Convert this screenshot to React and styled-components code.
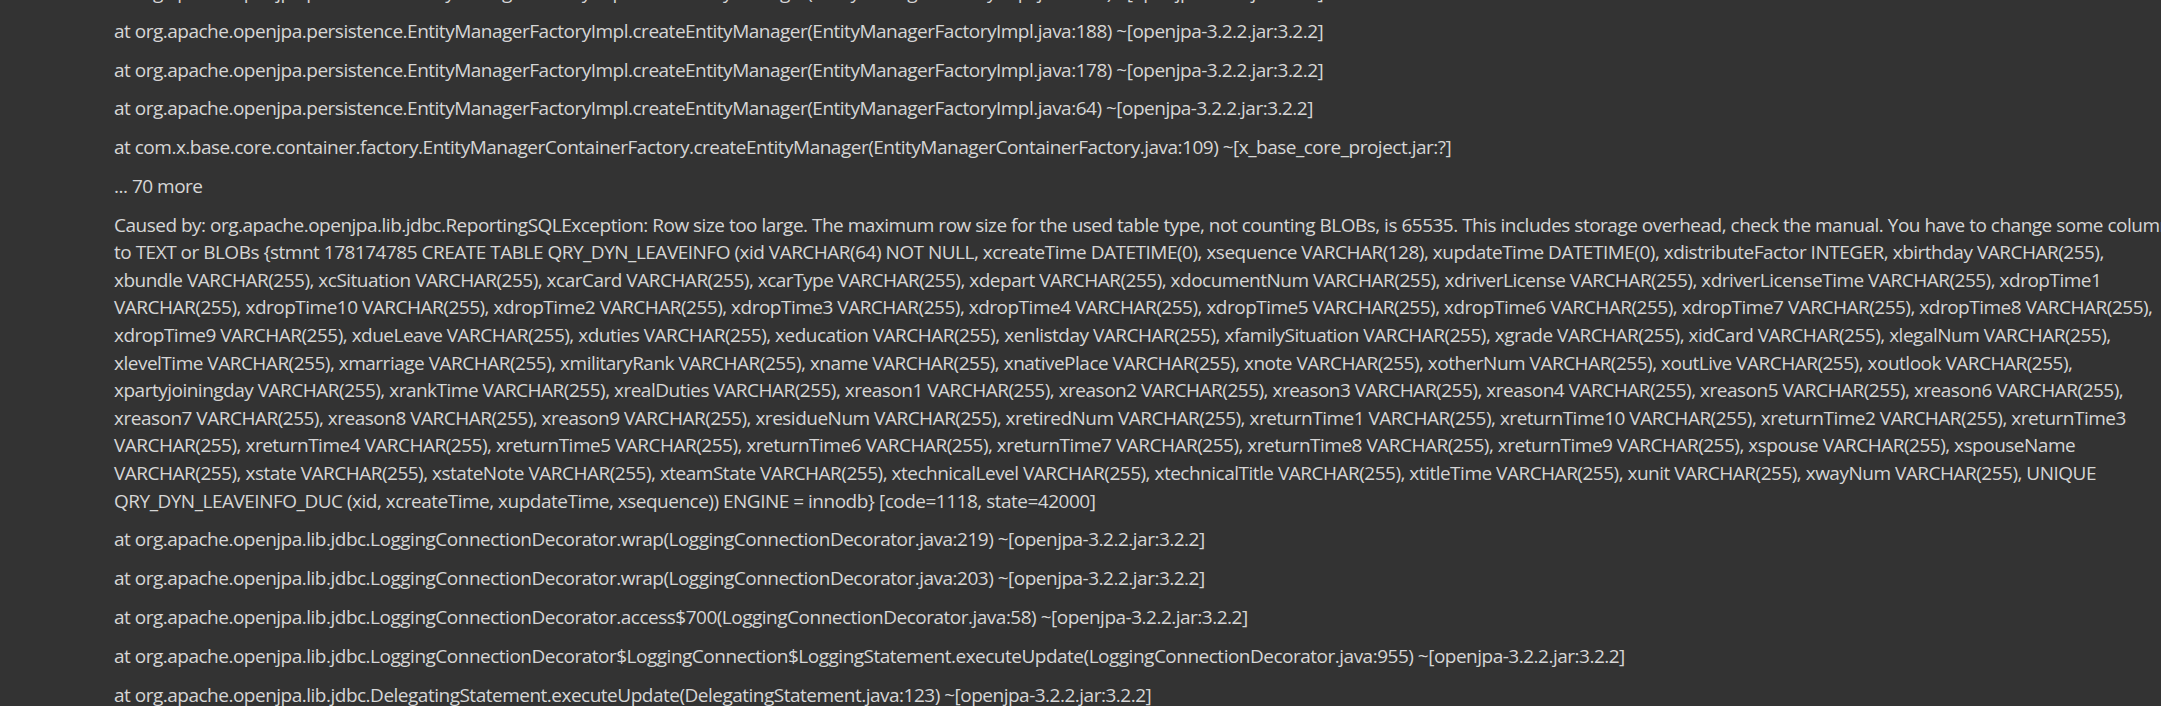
import React from 'react';
import styled, { createGlobalStyle } from "styled-components";

const GlobalStyle = createGlobalStyle`
    html, body {
        margin: 0;
        padding: 0;
        background: #333333;
        overflow: hidden;
    }
`;

const JAR = "~[openjpa-3.2.2.jar:3.2.2]";

const entries = [
    [`at org.apache.openjpa.persistence.EntityManagerFactoryImpl.createEntityManager(EntityManagerFactoryImpl.java:197) ${JAR}`],
    [`at org.apache.openjpa.persistence.EntityManagerFactoryImpl.createEntityManager(EntityManagerFactoryImpl.java:188) ${JAR}`],
    [`at org.apache.openjpa.persistence.EntityManagerFactoryImpl.createEntityManager(EntityManagerFactoryImpl.java:178) ${JAR}`],
    [`at org.apache.openjpa.persistence.EntityManagerFactoryImpl.createEntityManager(EntityManagerFactoryImpl.java:64) ${JAR}`],
    ["at com.x.base.core.container.factory.EntityManagerContainerFactory.createEntityManager(EntityManagerContainerFactory.java:109) ~[x_base_core_project.jar:?]"],
    ["... 70 more"],
    [
        "Caused by: org.apache.openjpa.lib.jdbc.ReportingSQLException: Row size too large. The maximum row size for the used table type, not counting BLOBs, is 65535. This includes storage overhead, check the manual. You have to change some columns",
        "to TEXT or BLOBs {stmnt 178174785 CREATE TABLE QRY_DYN_LEAVEINFO (xid VARCHAR(64) NOT NULL, xcreateTime DATETIME(0), xsequence VARCHAR(128), xupdateTime DATETIME(0), xdistributeFactor INTEGER, xbirthday VARCHAR(255),",
        "xbundle VARCHAR(255), xcSituation VARCHAR(255), xcarCard VARCHAR(255), xcarType VARCHAR(255), xdepart VARCHAR(255), xdocumentNum VARCHAR(255), xdriverLicense VARCHAR(255), xdriverLicenseTime VARCHAR(255), xdropTime1",
        "VARCHAR(255), xdropTime10 VARCHAR(255), xdropTime2 VARCHAR(255), xdropTime3 VARCHAR(255), xdropTime4 VARCHAR(255), xdropTime5 VARCHAR(255), xdropTime6 VARCHAR(255), xdropTime7 VARCHAR(255), xdropTime8 VARCHAR(255),",
        "xdropTime9 VARCHAR(255), xdueLeave VARCHAR(255), xduties VARCHAR(255), xeducation VARCHAR(255), xenlistday VARCHAR(255), xfamilySituation VARCHAR(255), xgrade VARCHAR(255), xidCard VARCHAR(255), xlegalNum VARCHAR(255),",
        "xlevelTime VARCHAR(255), xmarriage VARCHAR(255), xmilitaryRank VARCHAR(255), xname VARCHAR(255), xnativePlace VARCHAR(255), xnote VARCHAR(255), xotherNum VARCHAR(255), xoutLive VARCHAR(255), xoutlook VARCHAR(255),",
        "xpartyjoiningday VARCHAR(255), xrankTime VARCHAR(255), xrealDuties VARCHAR(255), xreason1 VARCHAR(255), xreason2 VARCHAR(255), xreason3 VARCHAR(255), xreason4 VARCHAR(255), xreason5 VARCHAR(255), xreason6 VARCHAR(255),",
        "xreason7 VARCHAR(255), xreason8 VARCHAR(255), xreason9 VARCHAR(255), xresidueNum VARCHAR(255), xretiredNum VARCHAR(255), xreturnTime1 VARCHAR(255), xreturnTime10 VARCHAR(255), xreturnTime2 VARCHAR(255), xreturnTime3",
        "VARCHAR(255), xreturnTime4 VARCHAR(255), xreturnTime5 VARCHAR(255), xreturnTime6 VARCHAR(255), xreturnTime7 VARCHAR(255), xreturnTime8 VARCHAR(255), xreturnTime9 VARCHAR(255), xspouse VARCHAR(255), xspouseName",
        "VARCHAR(255), xstate VARCHAR(255), xstateNote VARCHAR(255), xteamState VARCHAR(255), xtechnicalLevel VARCHAR(255), xtechnicalTitle VARCHAR(255), xtitleTime VARCHAR(255), xunit VARCHAR(255), xwayNum VARCHAR(255), UNIQUE",
        "QRY_DYN_LEAVEINFO_DUC (xid, xcreateTime, xupdateTime, xsequence)) ENGINE = innodb} [code=1118, state=42000]",
    ],
    [`at org.apache.openjpa.lib.jdbc.LoggingConnectionDecorator.wrap(LoggingConnectionDecorator.java:219) ${JAR}`],
    [`at org.apache.openjpa.lib.jdbc.LoggingConnectionDecorator.wrap(LoggingConnectionDecorator.java:203) ${JAR}`],
    [`at org.apache.openjpa.lib.jdbc.LoggingConnectionDecorator.access$700(LoggingConnectionDecorator.java:58) ${JAR}`],
    [`at org.apache.openjpa.lib.jdbc.LoggingConnectionDecorator$LoggingConnection$LoggingStatement.executeUpdate(LoggingConnectionDecorator.java:955) ${JAR}`],
    [`at org.apache.openjpa.lib.jdbc.DelegatingStatement.executeUpdate(DelegatingStatement.java:123) ${JAR}`],
];

export default function App() {
    return (
        <Viewport>
            <GlobalStyle />
            <Log>
                {entries.map((lines, i) => (
                    <Entry key={i}>
                        {lines.map((text, j) => (
                            <Line key={j}>{text}</Line>
                        ))}
                    </Entry>
                ))}
            </Log>
        </Viewport>
    )
}

const Viewport = styled.main`
    width: 2161px;
    height: 706px;
    overflow: hidden;
    background: #333333;
`;

// scrolled a little: the first trace line is cut by the top edge
const Log = styled.div`
    display: flex;
    flex-direction: column;
    gap: 11.2px;
    margin-top: -21px;
    padding-left: 114px;
    color: #d6d6d6;
    font-family: 'Open Sans', sans-serif;
    font-size: 19px;
    letter-spacing: -0.5px;
`;

const Entry = styled.p`
    margin: 0;
`;

const Line = styled.span`
    display: block;
    line-height: 27.6px;
    white-space: nowrap;
`;
